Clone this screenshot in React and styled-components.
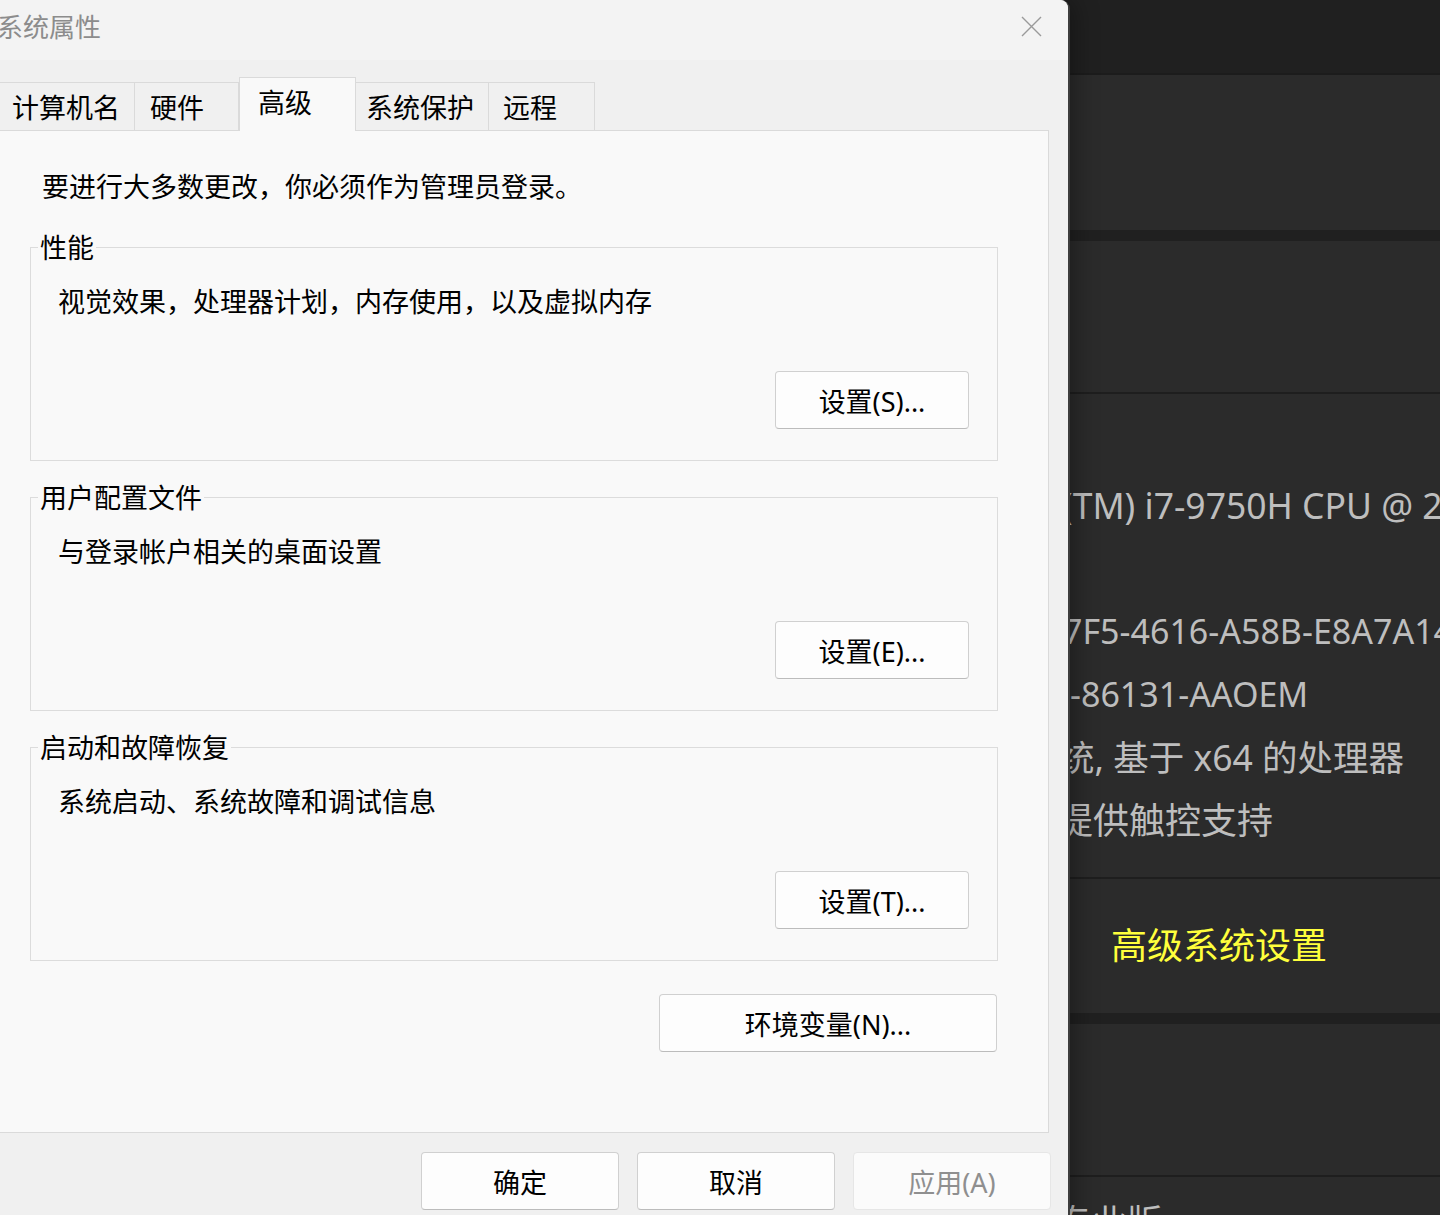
import React from 'react';
import styled, { createGlobalStyle } from 'styled-components';

const uiFont = `"Noto Sans", "Noto Sans CJK SC", sans-serif`;

const GlobalStyle = createGlobalStyle`
  html, body {
    margin: 0;
    padding: 0;
    background: #202020;
  }
  body {
    overflow: hidden;
    font-family: ${uiFont};
  }
`;

const specLines = [
  { text: '', indent: 0, size: 34 },
  { text: '(TM) i7-9750H CPU @ 2.60GHz', indent: 1062, size: 35.5 },
  { text: '', indent: 0, size: 34 },
  { text: '7F5-4616-A58B-E8A7A14C2D90', indent: 1063, size: 34 },
  { text: '-86131-AAOEM', indent: 1070, size: 34 },
  { text: '统, 基于 x64 的处理器', indent: 1059, size: 35.5 },
  { text: '提供触控支持', indent: 1057, size: 36 },
];

const tabs = [
  { label: '计算机名', w: 139, pad: 15, first: true },
  { label: '硬件', w: 104, pad: 15 },
  { label: '高级', w: 117, pad: 18, active: true },
  { label: '系统保护', w: 133, pad: 10 },
  { label: '远程', w: 106, pad: 14 },
];

const groups = [
  { title: '性能', desc: '视觉效果，处理器计划，内存使用，以及虚拟内存', button: '设置(S)...' },
  { title: '用户配置文件', desc: '与登录帐户相关的桌面设置', button: '设置(E)...' },
  { title: '启动和故障恢复', desc: '系统启动、系统故障和调试信息', button: '设置(T)...' },
];

const CloseIcon = () => (
  <svg width="21" height="21" viewBox="0 0 21 21" fill="none">
    <path d="M1 1 L20 20 M20 1 L1 20" stroke="#9a9a9a" strokeWidth="1.4" />
  </svg>
);

const App = () => {
  return (
    <Desktop>
      <GlobalStyle />
      <SettingsPage>
        <TopBar />
        <Card $h={155} />
        <Card $gap={11}>
          <CardItem $h={151} />
          <SpecList>
            {specLines.map((line, i) => (
              <SpecLine key={i} $indent={line.indent} $size={line.size}>
                {line.text}
              </SpecLine>
            ))}
          </SpecList>
          <LinkRow>高级系统设置</LinkRow>
        </Card>
        <Card $gap={11}>
          <CardItem $h={151} />
          <EditionRow>专业版</EditionRow>
        </Card>
      </SettingsPage>

      <Dialog>
        <TitleBar>
          <Title>系统属性</Title>
          <CloseIcon />
        </TitleBar>
        <Body>
          <TabStrip>
            {tabs.map((t) => (
              <Tab key={t.label} $w={t.w} $pad={t.pad} $active={t.active} $first={t.first}>
                {t.label}
              </Tab>
            ))}
          </TabStrip>
          <Panel>
            <Notice>要进行大多数更改，你必须作为管理员登录。</Notice>
            {groups.map((g, i) => (
              <GroupBox key={g.title} $first={i === 0}>
                <Legend>{g.title}</Legend>
                <Description>{g.desc}</Description>
                <PushButton $w={194} $top={51}>
                  {g.button}
                </PushButton>
              </GroupBox>
            ))}
            <PushButton $w={338} $top={33} $right={1}>
              环境变量(N)...
            </PushButton>
          </Panel>
          <Footer>
            <FooterButton>确定</FooterButton>
            <FooterButton>取消</FooterButton>
            <FooterButton disabled>应用(A)</FooterButton>
          </Footer>
        </Body>
      </Dialog>
    </Desktop>
  );
};

const Desktop = styled.div`
  position: relative;
  width: 1440px;
  height: 1215px;
  overflow: hidden;
  background: #202020;
`;

/* dark settings page behind the dialog */
const SettingsPage = styled.main`
  display: flex;
  flex-direction: column;
  width: 100%;
`;

const TopBar = styled.div`
  height: 73px;
  border-bottom: 2px solid #1c1c1c;
`;

const Card = styled.section`
  display: flex;
  flex-direction: column;
  margin-top: ${(p) => p.$gap || 0}px;
  height: ${(p) => (p.$h ? `${p.$h}px` : 'auto')};
  background: #2b2b2b;
`;

const CardItem = styled.div`
  height: ${(p) => p.$h}px;
`;

const SpecList = styled.div`
  display: flex;
  flex-direction: column;
  height: 485px;
  box-sizing: border-box;
  padding-top: 17px;
  border-top: 2px solid #1e1e1e;
`;

const SpecLine = styled.div`
  height: 63px;
  line-height: 63px;
  padding-left: ${(p) => p.$indent}px;
  font-family: "Noto Sans", "Noto Sans CJK SC", sans-serif;
  font-size: ${(p) => p.$size}px;
  color: #bebebe;
  white-space: nowrap;
`;

const LinkRow = styled.div`
  display: flex;
  align-items: center;
  height: 136px;
  box-sizing: border-box;
  padding: 0 0 6px 1111px;
  border-top: 2px solid #1e1e1e;
  font-family: "Noto Sans CJK SC", sans-serif;
  font-size: 36px;
  color: #ffff3c;
`;

const EditionRow = styled.div`
  height: 60px;
  box-sizing: border-box;
  padding: 18px 0 0 1057px;
  border-top: 2px solid #1e1e1e;
  font-family: "Noto Sans CJK SC", sans-serif;
  font-size: 35px;
  line-height: 50px;
  color: #bebebe;
`;

/* the system properties window */
const Dialog = styled.div`
  position: absolute;
  top: 0;
  left: -40px;
  width: 1110px;
  height: 1240px;
  box-sizing: border-box;
  background: #f0f0f0;
  border-right: 2px solid #3d3d3d;
  border-top-right-radius: 9px;
  box-shadow: 4px 0 24px rgba(0, 0, 0, 0.35);
  font-family: ${uiFont};
  color: #000;
`;

const TitleBar = styled.header`
  display: flex;
  align-items: center;
  justify-content: space-between;
  height: 60px;
  box-sizing: border-box;
  padding: 0 26px 7px 37px;
  background: #f3f3f3;
  border-top-right-radius: 8px;
`;

const Title = styled.span`
  font-size: 26px;
  line-height: 1;
  color: #8c8c8c;
`;

const Body = styled.div`
  padding: 0 19px 0 34px;
`;

const TabStrip = styled.div`
  display: flex;
  align-items: flex-end;
  height: 70px;
  box-sizing: border-box;
  padding-left: 2px;
`;

const Tab = styled.div`
  position: relative;
  z-index: ${(p) => (p.$active ? 2 : 1)};
  width: ${(p) => p.$w}px;
  height: ${(p) => (p.$active ? 54 : 48)}px;
  margin-bottom: ${(p) => (p.$active ? -1 : 0)}px;
  box-sizing: border-box;
  padding: 7px 0 0 ${(p) => p.$pad}px;
  background: ${(p) => (p.$active ? '#f9f9f9' : '#f0f0f0')};
  border-top: 1px solid #dadada;
  border-right: 1px solid #dadada;
  border-left: ${(p) => (p.$first || p.$active ? '1px solid #dadada' : 'none')};
  font-size: 27px;
  line-height: 36px;
  white-space: nowrap;
`;

const Panel = styled.section`
  display: flex;
  flex-direction: column;
  height: 1003px;
  box-sizing: border-box;
  padding: 38px 50px 0 35px;
  background: #f9f9f9;
  border: 1px solid #dadada;
`;

const Notice = styled.p`
  margin: 0 0 0 12px;
  font-size: 27px;
  line-height: 36px;
`;

const GroupBox = styled.div`
  display: flex;
  flex-direction: column;
  margin-top: ${(p) => (p.$first ? 42 : 36)}px;
  padding: 0 28px 31px 27px;
  border: 1px solid #dcdcdc;
`;

const Legend = styled.span`
  align-self: flex-start;
  margin: -17px 0 0 -20px;
  padding: 0 2px;
  background: #f9f9f9;
  font-size: 27px;
  line-height: 34px;
`;

const Description = styled.div`
  margin-top: 19px;
  font-size: 27px;
  line-height: 36px;
`;

const PushButton = styled.button`
  align-self: flex-end;
  width: ${(p) => p.$w}px;
  height: 58px;
  margin-top: ${(p) => p.$top}px;
  margin-right: ${(p) => p.$right || 0}px;
  padding: 0;
  background: #fdfdfd;
  border: 1px solid #d0d0d0;
  border-bottom-color: #bcbcbc;
  border-radius: 4px;
  font-family: ${uiFont};
  font-size: 27px;
  color: #000;
`;

const Footer = styled.div`
  display: flex;
  justify-content: flex-end;
  gap: 18px;
  margin: 19px -2px 0 0;
`;

const FooterButton = styled.button`
  width: 198px;
  height: 58px;
  padding: 0;
  background: ${(p) => (p.disabled ? '#fbfbfb' : '#fdfdfd')};
  border: 1px solid ${(p) => (p.disabled ? '#e6e6e6' : '#d0d0d0')};
  border-bottom-color: ${(p) => (p.disabled ? '#e6e6e6' : '#bcbcbc')};
  border-radius: 4px;
  font-family: ${uiFont};
  font-size: 27px;
  color: ${(p) => (p.disabled ? '#8f8f8f' : '#000')};
`;

export default App;
